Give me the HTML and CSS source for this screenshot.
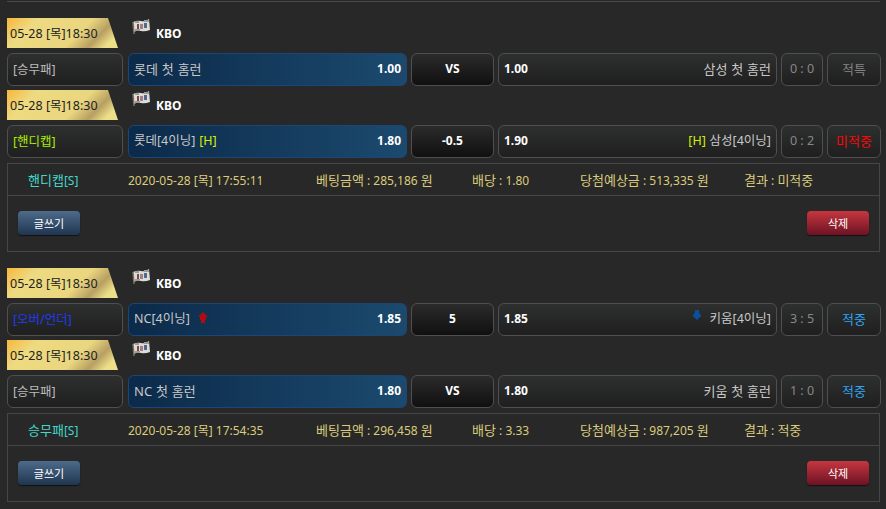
FILE: index.html
```html
<!DOCTYPE html>
<html lang="en">
<head>
    <meta charset="UTF-8">
    <meta name="viewport" content="width=device-width, initial-scale=1.0">
    <title>베팅내역</title>
    <link rel="stylesheet" href="styles.css">
</head>
<body>

    <div class="top-line"></div>

    <div class="bet-group">
        <div class="game-head">
            <div class="date-tag">05-28 [목]18:30</div>
            <div class="league">
                <svg class="flag" width="18" height="16" viewBox="0 0 18 16"><path d="M1 3 Q5 1 9 2 T17 0 L18 11 Q13 13 9 12 T2 13 Z" fill="#dedcd6"/><path d="M1 3 L2 15" stroke="#77725f" stroke-width="1.5"/><path d="M3 2 H7 V4 H3 Z M12 1 H17 V3 H12 Z M3 10 H8 V12 H3 Z" fill="#9a9a96"/><rect x="5" y="5" width="2" height="5" fill="#84444a"/><rect x="8" y="5" width="3" height="5" fill="#9a8288"/><rect x="12" y="4" width="3" height="5" fill="#50698c"/></svg>
                <b>KBO</b>
            </div>
        </div>
        <div class="game-row">
            <div class="box type">[승무패]</div>
            <div class="box home"><span class="name">롯데 첫 홈런</span><b>1.00</b></div>
            <div class="box center">VS</div>
            <div class="box away"><b>1.00</b><span class="name">삼성 첫 홈런</span></div>
            <div class="box score">0 : 0</div>
            <div class="box result special">적특</div>
        </div>

        <div class="game-head">
            <div class="date-tag">05-28 [목]18:30</div>
            <div class="league">
                <svg class="flag" width="18" height="16" viewBox="0 0 18 16"><path d="M1 3 Q5 1 9 2 T17 0 L18 11 Q13 13 9 12 T2 13 Z" fill="#dedcd6"/><path d="M1 3 L2 15" stroke="#77725f" stroke-width="1.5"/><path d="M3 2 H7 V4 H3 Z M12 1 H17 V3 H12 Z M3 10 H8 V12 H3 Z" fill="#9a9a96"/><rect x="5" y="5" width="2" height="5" fill="#84444a"/><rect x="8" y="5" width="3" height="5" fill="#9a8288"/><rect x="12" y="4" width="3" height="5" fill="#50698c"/></svg>
                <b>KBO</b>
            </div>
        </div>
        <div class="game-row">
            <div class="box type handicap">[핸디캡]</div>
            <div class="box home"><span class="name inning">롯데[4이닝] <em>[H]</em></span><b>1.80</b></div>
            <div class="box center">-0.5</div>
            <div class="box away"><b>1.90</b><span class="name inning"><em>[H]</em> 삼성[4이닝]</span></div>
            <div class="box score">0 : 2</div>
            <div class="box result miss">미적중</div>
        </div>

        <div class="info">
            <div class="info-row">
                <div class="info-type"><span class="ko">핸디캡</span>[S]</div>
                <div>2020-05-28 [목] 17:55:11</div>
                <div><span class="ko">베팅금액</span> : 285,186 <span class="ko">원</span></div>
                <div><span class="ko">배당</span> : 1.80</div>
                <div><span class="ko">당첨예상금</span> : 513,335 <span class="ko">원</span></div>
                <div><span class="ko">결과</span> : <span class="ko">미적중</span></div>
            </div>
            <div class="info-actions">
                <button class="btn btn-write">글쓰기</button>
                <button class="btn btn-delete">삭제</button>
            </div>
        </div>
    </div>

    <div class="bet-group">
        <div class="game-head">
            <div class="date-tag">05-28 [목]18:30</div>
            <div class="league">
                <svg class="flag" width="18" height="16" viewBox="0 0 18 16"><path d="M1 3 Q5 1 9 2 T17 0 L18 11 Q13 13 9 12 T2 13 Z" fill="#dedcd6"/><path d="M1 3 L2 15" stroke="#77725f" stroke-width="1.5"/><path d="M3 2 H7 V4 H3 Z M12 1 H17 V3 H12 Z M3 10 H8 V12 H3 Z" fill="#9a9a96"/><rect x="5" y="5" width="2" height="5" fill="#84444a"/><rect x="8" y="5" width="3" height="5" fill="#9a8288"/><rect x="12" y="4" width="3" height="5" fill="#50698c"/></svg>
                <b>KBO</b>
            </div>
        </div>
        <div class="game-row">
            <div class="box type overunder">[오버/언더]</div>
            <div class="box home"><span class="name inning">NC[4이닝] <svg class="arrow-up" width="10" height="11" viewBox="0 0 10 11"><path d="M5 0 L10 5 H8 V8 H7 V11 H3 V8 H2 V5 H0 Z" fill="#b00d12"/></svg></span><b>1.85</b></div>
            <div class="box center">5</div>
            <div class="box away"><b>1.85</b><span class="name inning"><svg class="arrow-down" width="10" height="10" viewBox="0 0 10 10"><path d="M5 10 L0 5 H2 V3 H3 V0 H7 V3 H8 V5 H10 Z" fill="#0b4f9e"/></svg> 키움[4이닝]</span></div>
            <div class="box score">3 : 5</div>
            <div class="box result hit">적중</div>
        </div>

        <div class="game-head">
            <div class="date-tag">05-28 [목]18:30</div>
            <div class="league">
                <svg class="flag" width="18" height="16" viewBox="0 0 18 16"><path d="M1 3 Q5 1 9 2 T17 0 L18 11 Q13 13 9 12 T2 13 Z" fill="#dedcd6"/><path d="M1 3 L2 15" stroke="#77725f" stroke-width="1.5"/><path d="M3 2 H7 V4 H3 Z M12 1 H17 V3 H12 Z M3 10 H8 V12 H3 Z" fill="#9a9a96"/><rect x="5" y="5" width="2" height="5" fill="#84444a"/><rect x="8" y="5" width="3" height="5" fill="#9a8288"/><rect x="12" y="4" width="3" height="5" fill="#50698c"/></svg>
                <b>KBO</b>
            </div>
        </div>
        <div class="game-row">
            <div class="box type">[승무패]</div>
            <div class="box home"><span class="name">NC 첫 홈런</span><b>1.80</b></div>
            <div class="box center">VS</div>
            <div class="box away"><b>1.80</b><span class="name">키움 첫 홈런</span></div>
            <div class="box score">1 : 0</div>
            <div class="box result hit">적중</div>
        </div>

        <div class="info">
            <div class="info-row">
                <div class="info-type"><span class="ko">승무패</span>[S]</div>
                <div>2020-05-28 [목] 17:54:35</div>
                <div><span class="ko">베팅금액</span> : 296,458 <span class="ko">원</span></div>
                <div><span class="ko">배당</span> : 3.33</div>
                <div><span class="ko">당첨예상금</span> : 987,205 <span class="ko">원</span></div>
                <div><span class="ko">결과</span> : <span class="ko">적중</span></div>
            </div>
            <div class="info-actions">
                <button class="btn btn-write">글쓰기</button>
                <button class="btn btn-delete">삭제</button>
            </div>
        </div>
    </div>

</body>
</html>
```

FILE: styles.css
```css
body {
    font-family: "Noto Sans", "Noto Sans CJK KR", sans-serif;
    font-size: 12px;
    background-color: #272827;
    color: #ccc;
    margin: 0;
    padding: 0 5px 0 7px;
    overflow: hidden;
}
.top-line {
    height: 1px;
    margin: 1px 1px 0 0;
    background: #4a4a4a;
}
.bet-group {
    padding-top: 16px;
}
.game-head {
    display: flex;
    height: 30px;
    margin-bottom: 5px;
}
.date-tag {
    width: 111px;
    height: 30px;
    padding-left: 3px;
    box-sizing: border-box;
    line-height: 31px;
    font-size: 12.5px;
    color: #222;
    background: linear-gradient(135deg, #f6b73c 0%, #eeda80 22%, #e9d67f 62%, #b89f62 78%, #ecdf88 90%);
    clip-path: polygon(0 0, 101px 0, 111px 100%, 0 100%);
    white-space: nowrap;
}
.league {
    display: flex;
    margin-left: 14px;
    color: #fff;
}
.league b {
    margin: 8px 0 0 6px;
    line-height: 16px;
}
.flag {
    margin-top: 1px;
}
.game-row {
    display: flex;
    gap: 4px;
    height: 33px;
    margin-bottom: 4px;
}
.box {
    display: flex;
    align-items: center;
    justify-content: space-between;
    box-sizing: border-box;
    height: 33px;
    padding: 0 5px 2px;
    line-height: 16px;
    border: 1px solid #4f4f4f;
    border-radius: 6px;
    background: linear-gradient(#2e2f2f, #1f1f1f);
    white-space: nowrap;
}
.box b {
    color: #fff;
}
.box em {
    font-style: normal;
    color: #d4f000;
}
.name {
    font-size: 13px;
    word-spacing: 0.5px;
    color: #c8c8c8;
}
.inning {
    font-size: 12.5px;
}
.ko {
    font-size: 13px;
}
.type {
    width: 116px;
    margin-right: 1px;
    padding-bottom: 0;
    color: #bbb;
    font-size: 12.5px;
}
.handicap {
    color: #a8ec00;
}
.overunder {
    color: #1f3cf0;
}
.home {
    width: 279px;
    border-color: #1d4674;
    background: linear-gradient(90deg, #0c2a4a, #1b4a6e);
}
.center {
    width: 83px;
    justify-content: center;
    color: #fff;
    font-weight: bold;
    background: linear-gradient(#2b2b2b, #101010);
}
.away {
    width: 279px;
}
.score {
    width: 42px;
    justify-content: center;
    color: #888;
    font-size: 12.5px;
}
.result {
    width: 54px;
    justify-content: center;
    font-size: 13px;
}
.special {
    color: #858585;
}
.miss {
    color: #f80808;
}
.hit {
    color: #2fa4f0;
}
.arrow-up {
    margin-left: 4px;
    vertical-align: 0;
}
.arrow-down {
    margin-right: 4px;
    vertical-align: 3px;
}
.info {
    box-sizing: border-box;
    width: 873px;
    height: 89px;
    margin-top: 5px;
    border: 1px solid #464646;
}
.info-row {
    display: grid;
    grid-template-columns: 100px 188px 156px 108px 164px 1fr;
    align-items: center;
    height: 31px;
    padding-left: 20px;
    border-bottom: 1px solid #464646;
    color: #dccb7c;
    white-space: nowrap;
}
.info-type {
    color: #45d6cc;
}
.info-actions {
    display: flex;
    justify-content: space-between;
    padding: 15px 10px 0;
}
.btn {
    width: 62px;
    height: 24px;
    padding: 0;
    border: none;
    border-radius: 4px;
    font-family: inherit;
    font-size: 11px;
    color: #fff;
    cursor: pointer;
    box-shadow: 0 1px 1px #111;
}
.btn-write {
    background: linear-gradient(#4d6b8a, #1f3550);
}
.btn-delete {
    background: linear-gradient(#c6373f, #6d1224);
}
```
